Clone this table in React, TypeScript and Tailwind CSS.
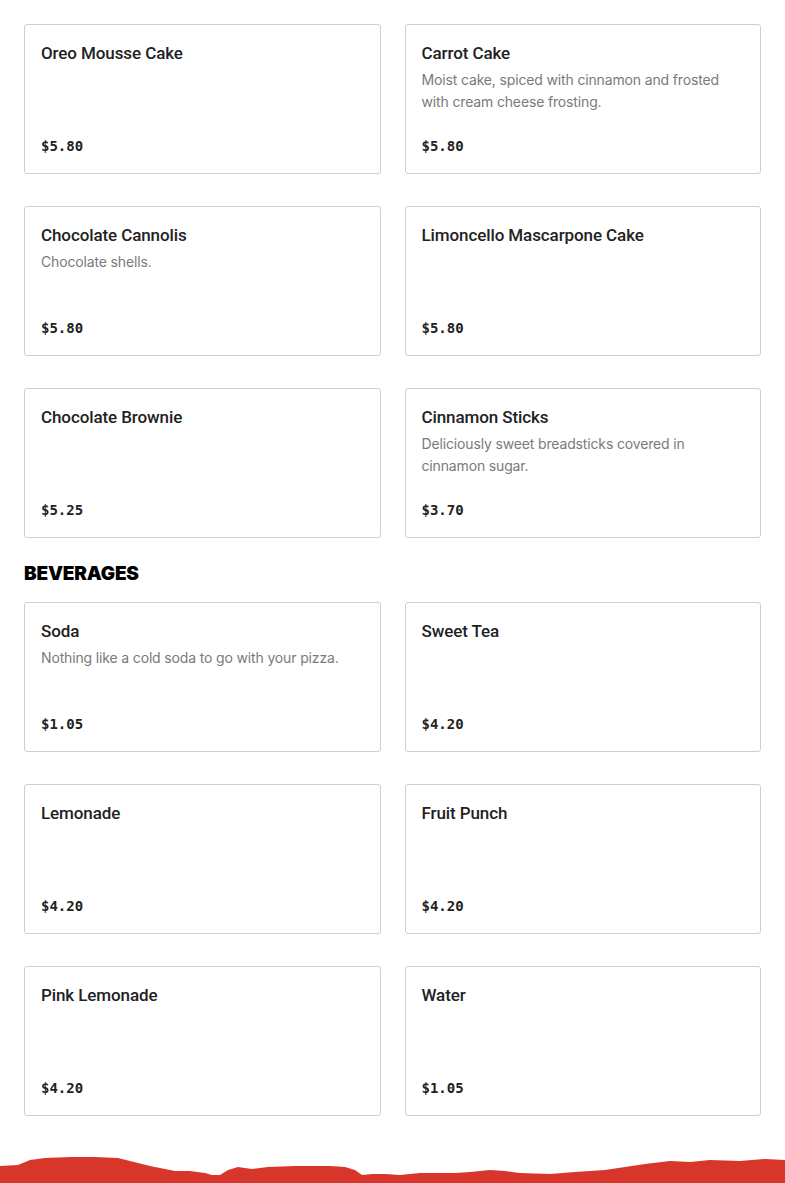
interface MenuItemProps {
  name: string;
  description?: string;
  price: string;
}

const desserts: MenuItemProps[] = [
  { name: 'Oreo Mousse Cake', price: '$5.80' },
  { name: 'Carrot Cake', description: 'Moist cake, spiced with cinnamon and frosted with cream cheese frosting.', price: '$5.80' },
  { name: 'Chocolate Cannolis', description: 'Chocolate shells.', price: '$5.80' },
  { name: 'Limoncello Mascarpone Cake', price: '$5.80' },
  { name: 'Chocolate Brownie', price: '$5.25' },
  { name: 'Cinnamon Sticks', description: 'Deliciously sweet breadsticks covered in cinnamon sugar.', price: '$3.70' },
];

const beverages: MenuItemProps[] = [
  { name: 'Soda', description: 'Nothing like a cold soda to go with your pizza.', price: '$1.05' },
  { name: 'Sweet Tea', price: '$4.20' },
  { name: 'Lemonade', price: '$4.20' },
  { name: 'Fruit Punch', price: '$4.20' },
  { name: 'Pink Lemonade', price: '$4.20' },
  { name: 'Water', price: '$1.05' },
];

function MenuItem({ name, description, price }: MenuItemProps) {
  return (
    <div className="bg-white border border-[#cfcfcf] rounded-[3px] px-4 pt-4 pb-[17px] h-[150px] flex flex-col">
      <h3 className="text-[17px] leading-6 font-medium text-[#222] font-['Roboto',sans-serif] tracking-[-0.1px]">{name}</h3>
      {description && (
        <p className="mt-1 text-[14px] leading-[22px] text-[#7a7a7a] font-['Inter',sans-serif] tracking-[-0.15px]">{description}</p>
      )}
      <p className="mt-auto text-[14px] leading-5 font-bold text-[#222] font-['DejaVu_Sans_Mono',monospace]">{price}</p>
    </div>
  );
}

function TornEdge() {
  return (
    <svg viewBox="0 0 785 40" className="block w-full h-[40px]" preserveAspectRatio="none">
      <path
        fill="#d9362b"
        d="M0 10 L18 9 L30 4 L45 2 L70 1 L95 1 L118 2 L130 5 L142 8 L150 10 L165 13 L175 15 L190 15 L205 17 L212 19 L220 19 L228 14 L238 11 L252 13 L268 11 L295 10 L330 10 L345 11 L355 14 L362 19 L372 18 L385 18 L400 19 L420 17 L440 17 L455 17 L470 16 L490 14 L505 15 L520 17 L550 18 L575 16 L590 15 L605 14 L625 11 L645 8 L670 5 L690 6 L710 4 L740 5 L765 3 L785 4 L785 40 L0 40 Z"
      />
    </svg>
  );
}

export default function App() {
  return (
    <div className="min-h-[1183px] bg-white flex flex-col">
      <div className="px-6 pt-6">
        <div className="grid grid-cols-2 gap-x-6 gap-y-8">
          {desserts.map((item) => (
            <MenuItem key={item.name} {...item} />
          ))}
        </div>
        <h2 className="mt-[22px] mb-[14px] text-[19px] leading-7 font-black text-black font-['Inter',sans-serif] tracking-[-0.2px]">BEVERAGES</h2>
        <div className="grid grid-cols-2 gap-x-6 gap-y-8">
          {beverages.map((item) => (
            <MenuItem key={item.name} {...item} />
          ))}
        </div>
      </div>
      <div className="mt-[40px]">
        <TornEdge />
        <div className="bg-[#d9362b] h-[200px]" />
      </div>
    </div>
  );
}
